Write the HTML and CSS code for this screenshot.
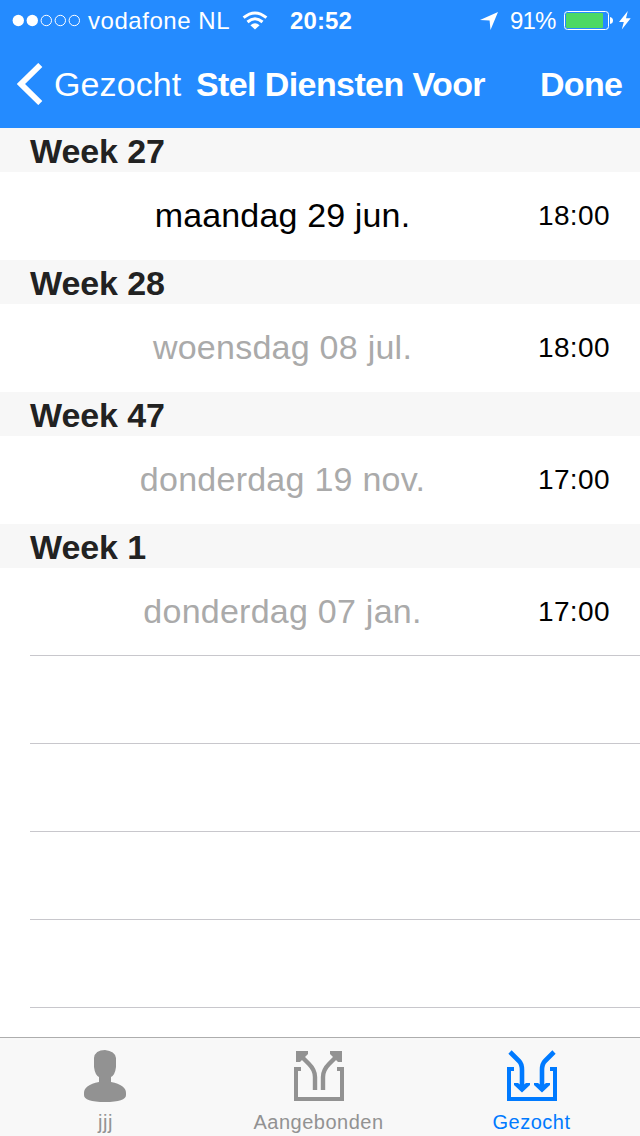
FILE: index.html
```html
<!DOCTYPE html>
<html lang="nl">
<head>
<meta charset="utf-8">
<title>Stel Diensten Voor</title>
<link rel="stylesheet" href="styles.css">
</head>
<body>
<div class="screen">
  <header class="header">
    <div class="status">
      <svg class="signal" width="70" height="14" viewBox="0 0 70 14">
        <g fill="#fff"><circle cx="6.3" cy="6.5" r="5.7"/><circle cx="20.3" cy="6.5" r="5.7"/></g>
        <g fill="none" stroke="#fff"><circle cx="34.3" cy="6.5" r="5.2"/><circle cx="48.3" cy="6.5" r="5.2"/><circle cx="62.3" cy="6.5" r="5.2"/></g>
      </svg>
      <span class="carrier">vodafone NL</span>
      <svg class="wifi" width="26" height="20" viewBox="0 0 26 20">
        <g fill="none" stroke="#fff" stroke-width="3"><path d="M1.6 6.7Q13 -2.8 24.4 6.7"/><path d="M5.5 11Q13 4.6 20.5 11"/></g>
        <path d="M8.4 14.2Q13 10.4 17.6 14.2L13 18.6z" fill="#fff"/>
      </svg>
      <span class="clock">20:52</span>
      <svg class="location" width="18" height="19" viewBox="0 0 18 19"><path d="M18 1L10.5 19L9.6 9.4L0 8.9z" fill="#fff"/></svg>
      <span class="percent">91%</span>
      <svg class="battery" width="50" height="20" viewBox="0 0 50 20">
        <rect x=".5" y=".5" width="44" height="18" rx="3" fill="none" stroke="#fff"/>
        <rect x="2" y="2" width="37" height="15" rx="1" fill="#4cd964"/>
        <path d="M46 6Q49 6.5 49 9.5T46 13z" fill="#fff"/>
      </svg>
      <svg class="bolt" width="12" height="20" viewBox="0 0 12 20"><path d="M8.8 0L0 10.9H4.8L2.8 18.5L11.7 7.3H7z" fill="#fff"/></svg>
    </div>
    <nav class="nav">
      <svg class="back" width="26" height="42" viewBox="0 0 26 42"><path d="M23.3 2L4 21L23.3 40" fill="none" stroke="#fff" stroke-width="5.8"/></svg>
      <span class="back-label">Gezocht</span>
      <h1 class="title">Stel Diensten Voor</h1>
      <span class="done">Done</span>
    </nav>
  </header>
  <main class="list">
    <h2 class="week">Week 27</h2>
    <div class="row"><span class="day day-active">maandag 29 jun.</span><span class="time">18:00</span></div>
    <h2 class="week">Week 28</h2>
    <div class="row"><span class="day">woensdag 08 jul.</span><span class="time">18:00</span></div>
    <h2 class="week">Week 47</h2>
    <div class="row"><span class="day">donderdag 19 nov.</span><span class="time">17:00</span></div>
    <h2 class="week">Week 1</h2>
    <div class="row"><span class="day">donderdag 07 jan.</span><span class="time">17:00</span></div>
    <div class="blank first"></div>
    <div class="blank"></div>
    <div class="blank"></div>
    <div class="blank"></div>
    <div class="blank"></div>
  </main>
  <footer class="tabs">
    <div class="tab tab-user">
      <svg width="44" height="54" viewBox="0 0 44 54"><path d="M11 8Q12 0 22 0Q32 1 33 8V17Q32 25 28 27V32Q43 35 43 43V45Q43 52 22 52Q1 52 1 45V43Q1 35 16 32V27Q12 25 11 17z" fill="#929292"/></svg>
      <span class="label label-user">jjj</span>
    </div>
    <div class="tab tab-offered">
      <svg width="50" height="54" viewBox="0 0 50 54">
        <path d="M7 19H2V49H48V19H43" fill="none" stroke="#929292" stroke-width="4"/>
        <g fill="none" stroke="#929292" stroke-width="4.4"><path d="M6 5L15 14Q21 20 21 27V40"/><path d="M44 5L35 14Q29 20 29 27V40"/></g>
        <path d="M2 1H14V4L6 12H2zM48 1H36V4L44 12H48z" fill="#929292"/>
      </svg>
      <span class="label">Aangebonden</span>
    </div>
    <div class="tab tab-wanted">
      <svg width="50" height="54" viewBox="0 0 50 54">
        <g fill="none" stroke="#007aff" stroke-width="4"><path d="M7 19H2V49H48V19H43"/></g>
        <g fill="none" stroke="#007aff" stroke-width="4.6"><path d="M3 2L12 11Q15 14 15 20V39"/><path d="M47 2L38 11Q35 14 35 20V39"/></g>
        <path d="M7 33H11L15 36L19 33H23V35L15 42.5L7 35zM27 33H31L35 36L39 33H43V35L35 42.5L27 35z" fill="#007aff"/>
      </svg>
      <span class="label">Gezocht</span>
    </div>
  </footer>
</div>
</body>
</html>
```
FILE: styles.css
```css
* { box-sizing: border-box; }
body { margin: 0; font-family: "Liberation Sans", Arial, sans-serif; background: #fff; }
svg { display: block; flex: none; }
h1, h2 { margin: 0; }
.screen { width: 640px; height: 1136px; display: flex; flex-direction: column; overflow: hidden; }
.header { height: 128px; flex: none; background: #248bff; color: #fff; }
.status { height: 40px; display: flex; align-items: center; padding: 1px 0 0 12px; font-size: 24px; white-space: nowrap; }
.carrier { width: 160px; padding-left: 6px; letter-spacing: .55px; }
.clock { margin-left: 22px; width: 190px; font-weight: bold; letter-spacing: .1px; }
.percent { margin-left: 12px; width: 54px; letter-spacing: -.8px; }
.bolt { margin-left: 5px; }
.nav { height: 88px; display: flex; align-items: center; padding: 0 0 0 17px; font-size: 34px; white-space: nowrap; }
.back-label { width: 143px; padding-left: 11px; letter-spacing: .1px; }
.title { width: 345px; margin-left: 10px; font-size: 34px; letter-spacing: -.6px; }
.done { margin-left: -1px; font-weight: bold; letter-spacing: -.7px; }
.list { flex: 1; min-height: 0; overflow: hidden; }
.week { height: 44px; padding: 2px 30px 0; background: #f7f7f7; color: #222; font-size: 34px; line-height: 42px; letter-spacing: -.1px; }
.row { height: 88px; display: grid; grid-template-columns: 505px 1fr; align-items: center; padding: 0 30px; color: #000; }
.day { padding-bottom: 2px; text-align: center; font-size: 34px; letter-spacing: .25px; color: #aaa; }
.day-active { color: #000; letter-spacing: .15px; }
.time { font-size: 28px; text-align: right; letter-spacing: .4px; }
.blank { height: 88px; margin-left: 30px; border-top: 1px solid #c8c7cc; }
.first { margin-top: -1px; }
.tabs { height: 99px; flex: none; display: flex; background: #f8f8f8; border-top: 1px solid #adadad; color: #929292; }
.tab { width: 213px; display: flex; flex-direction: column; align-items: center; padding: 12px 2px 0 0; font-size: 20px; }
.tab-user { padding-right: 4px; }
.label { margin-top: 7px; line-height: 23px; letter-spacing: .5px; }
.label-user { padding-left: 2px; }
.tab-wanted { color: #007aff; }
```
